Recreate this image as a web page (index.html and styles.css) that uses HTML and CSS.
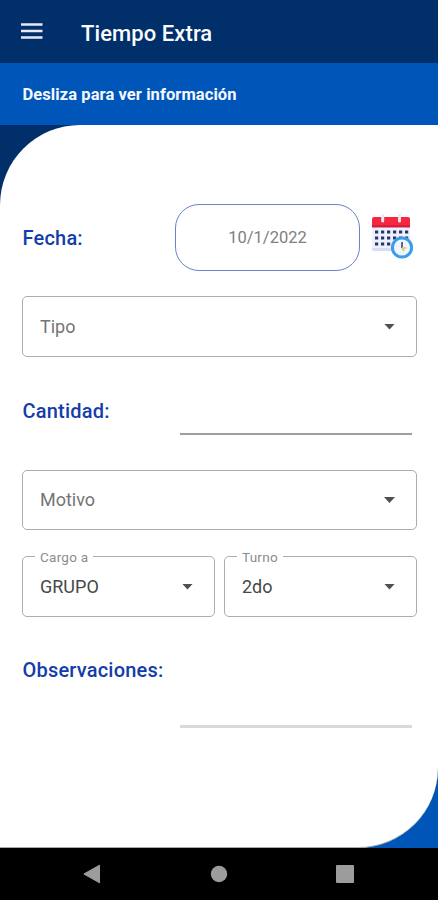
FILE: index.html
```html
<!DOCTYPE html>
<html lang="es">
<head>
<meta charset="utf-8">
<title>Tiempo Extra</title>
<link rel="stylesheet" href="styles.css">
</head>
<body>
<header class="appbar">
  <svg class="menu" width="22" height="16" viewBox="0 0 22 16"><path d="M0 1.5h21.5M0 8h21.5M0 14.5h21.5" stroke="#e9e9fa" stroke-width="2.5"/></svg>
  <h1 class="title">Tiempo Extra</h1>
</header>
<div class="banner"><span>Desliza para ver información</span></div>
<main class="backdrop">
  <form class="sheet">
    <div class="row date-row">
      <span class="label fecha">Fecha:</span>
      <div class="pill"><span>10/1/2022</span></div>
      <svg class="calendar" width="44" height="46" viewBox="0 0 44 46">
        <path d="M2 12h38v23q0 2-2 2H4q-2 0-2-2z" fill="#eef0fb"/>
        <path d="M2 34h38v1q0 2-2 2H4q-2 0-2-2z" fill="#d9dcf2"/>
        <path d="M4 3h34q2 0 2 2v8H2V5q0-2 2-2z" fill="#f5283f"/>
        <path d="M2 11h38v2.500H2z" fill="#d91c3b"/>
        <path d="M12.700 1.500v5.500M29.500 1.500v5.500" stroke="#e8e9f5" stroke-width="3" stroke-linecap="round"/>
        <path d="M5 18h34M5 24h34M5 30h16" stroke="#25366f" stroke-width="3.200" stroke-dasharray="3.200 2.800"/>
        <circle cx="32" cy="33.500" r="9.600" fill="#edf6ff" stroke="#3c9de6" stroke-width="3"/>
        <path d="M32 28v6" stroke="#35476f" stroke-width="1.600"/>
        <path d="M32 34h4.500M32 34l2 3" stroke="#e7c55e" stroke-width="1.600"/>
      </svg>
    </div>
    <div class="select tipo"><span class="value hint">Tipo</span><i class="caret"></i></div>
    <div class="row cantidad">
      <span class="label cant">Cantidad:</span>
      <div class="line"></div>
    </div>
    <div class="select motivo"><span class="value hint">Motivo</span><i class="caret"></i></div>
    <div class="pair">
      <div class="select"><span class="float">Cargo a</span><span class="value">GRUPO</span><i class="caret"></i></div>
      <div class="select"><span class="float">Turno</span><span class="value">2do</span><i class="caret"></i></div>
    </div>
    <div class="row observ">
      <span class="label obs">Observaciones:</span>
      <div class="line thick"></div>
    </div>
  </form>
</main>
<nav class="navbar">
  <svg width="18" height="20" viewBox="0 0 18 20"><path d="M16.500 1.200v17.600L.8 10z" fill="#9c9c9c" stroke="#9c9c9c" stroke-linejoin="round"/></svg>
  <svg width="18" height="18" viewBox="0 0 18 18"><circle cx="9" cy="9" r="8.200" fill="#9c9c9c"/></svg>
  <svg width="18" height="18" viewBox="0 0 18 18"><rect width="18" height="18" rx="1" fill="#9c9c9c"/></svg>
</nav>
</body>
</html>
```
FILE: styles.css
```css
* { box-sizing: border-box; }
body {
  margin: 0;
  width: 438px;
  height: 900px;
  display: flex;
  flex-direction: column;
  overflow: hidden;
  font-family: Roboto, "Liberation Sans", sans-serif;
  background: #fff;
}
.appbar {
  height: 63px;
  flex: none;
  display: flex;
  align-items: center;
  padding-left: 21px;
  background: #002f69;
}
.menu { margin-right: 38px; margin-bottom: 1px; }
.title {
  margin: 4px 0 0;
  font-size: 22px;
  line-height: 26px;
  font-weight: 500;
  letter-spacing: 0.08px;
  color: #fbfbff;
}
.banner {
  height: 62px;
  flex: none;
  display: flex;
  align-items: center;
  padding-left: 22.5px;
  background: #0056b8;
  color: #f5f8ff;
  font-size: 16.5px;
  letter-spacing: 0.08px;
  font-weight: 700;
}
.backdrop {
  height: 723px;
  flex: none;
  background: linear-gradient(90deg, #002f69 50%, #0056b8 50%);
}
.sheet {
  height: 100%;
  padding: 79px 21px 0 22px;
  background: #fff;
  border-bottom: 1px solid #aaa;
  border-radius: 80px 0 80px 0;
}
.row { display: flex; }
.label {
  width: 158px;
  flex: none;
  padding-left: 0.5px;
  font-size: 20px;
  line-height: 24px;
  font-weight: 500;
  letter-spacing: 0.2px;
  color: #143caa;
  white-space: nowrap;
}
.date-row { height: 67px; align-items: center; }
.date-row .label { width: 153px; }
.cantidad .label { padding-top: 1px; }
.pill {
  width: 185px;
  height: 67px;
  display: flex;
  align-items: center;
  justify-content: center;
  border: 1.5px solid #6b83c6;
  border-radius: 24px;
  font-size: 16.5px;
  color: #808080;
}
.calendar { margin: 0 0 2px 10px; }
.select {
  position: relative;
  height: 61px;
  display: flex;
  align-items: center;
  justify-content: space-between;
  padding: 0 21px 0 17px;
  border: 1.5px solid #adadad;
  border-radius: 5px;
}
.value { font-size: 18px; line-height: 22px; color: #474747; }
.hint { color: #757575; }
.caret {
  width: 11px;
  height: 6px;
  background: #505050;
  clip-path: polygon(0 0, 100% 0, 50% 100%);
}
.tipo { margin-top: 25px; }
.cantidad { height: 37px; margin-top: 41px; }
.line { width: 232px; border-bottom: 2px solid #9e9e9e; }
.motivo { height: 60px; margin-top: 35px; }
.pair {
  display: grid;
  grid-template-columns: 193px 193px;
  gap: 9px;
  margin-top: 26px;
}
.float {
  position: absolute;
  top: -8px;
  left: 12px;
  padding: 0 5px;
  background: #fff;
  font-size: 13.5px;
  line-height: 17px;
  letter-spacing: 0.25px;
  color: #8c8c8c;
}
.observ { height: 70px; margin-top: 41px; }
.thick { border-bottom: 3px solid #d9d9d9; }
.navbar {
  height: 52px;
  flex: none;
  display: flex;
  align-items: center;
  justify-content: space-between;
  padding: 0 84px 0 83px;
  background: #000;
}
```
